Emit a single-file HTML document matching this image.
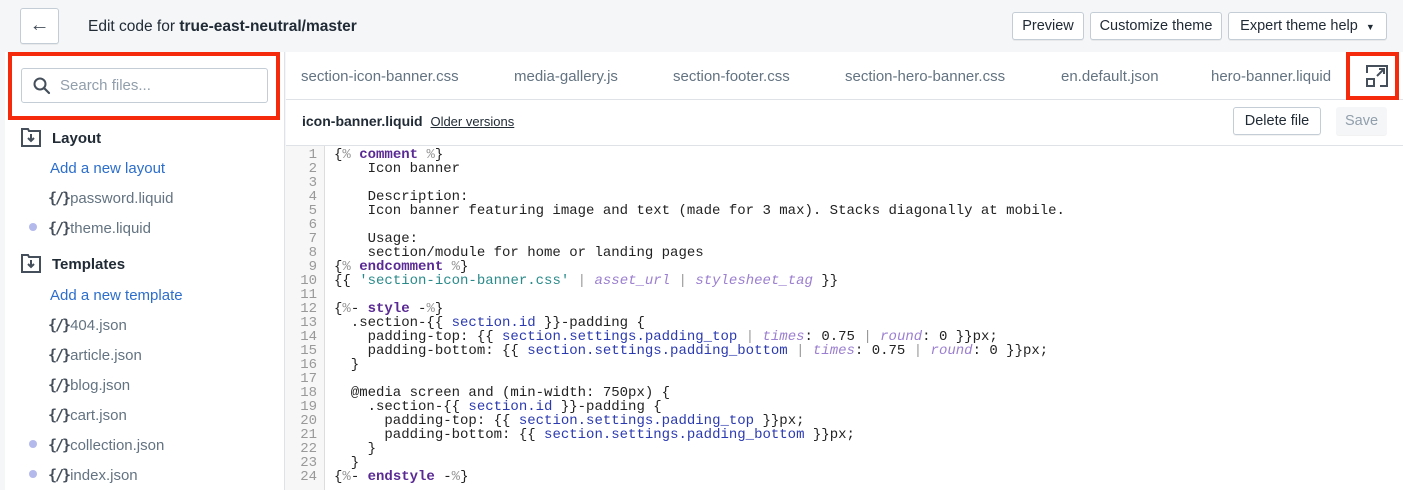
<!DOCTYPE html>
<html><head><style>
*{box-sizing:border-box;margin:0;padding:0}
body{width:1403px;height:490px;overflow:hidden;background:#f4f6f8;font-family:"Liberation Sans",sans-serif;position:relative;color:#212b36}
.abs{position:absolute}
.btn{position:absolute;top:12px;height:28px;border:1px solid #c4cdd5;border-radius:3px;background:#fff;font-size:14.5px;line-height:26px;text-align:center;color:#212b36;box-shadow:0 1px 0 rgba(0,0,0,.05)}
#side{position:absolute;left:5px;top:52px;width:280px;height:438px;background:#fff;border-right:1px solid #dfe3e8}
.tab{position:absolute;top:68px;font-size:15px;color:#637381}
.fi{position:absolute;left:48px;font-size:15px;color:#637381;white-space:nowrap}
.fi b{font-weight:bold;color:#454f5b;font-family:"DejaVu Sans Mono",monospace;font-size:15px;margin-right:1px;letter-spacing:-2px}
.dot{position:absolute;left:29px;width:8px;height:8px;border-radius:50%;background:#b4b9ec}
.link{position:absolute;left:50px;font-size:15px;color:#2c6ecb}
.hd{position:absolute;left:52px;font-size:15px;font-weight:bold;color:#212b36}
#code{position:absolute;left:285px;top:146px;width:1118px;height:344px;background:#fff}
#gut{position:absolute;left:0;top:0;width:40px;height:344px;background:#f7f7f7;border-right:1px solid #ddd}
pre{font-family:"Liberation Mono",monospace;font-size:14px;line-height:14px}
#nums{position:absolute;left:0;top:2px;width:32px;text-align:right;color:#999}
#src{position:absolute;left:49px;top:2px;color:#222}
.k{color:#5a2a94;font-weight:bold}.s{color:#2a8a8a}.f{color:#9b7fd0;font-style:italic}.p{color:#999}.v{color:#2b3ab0}
</style></head><body>
<div class="btn" style="left:20px;top:8px;width:39px;height:36px;font-size:20px;line-height:32px;color:#454f5b">&#8592;</div>
<div class="abs" style="left:88px;top:18px;font-size:15.5px;color:#212b36">Edit code for <b>true-east-neutral/master</b></div>
<div class="btn" style="left:1012px;width:72px">Preview</div>
<div class="btn" style="left:1090px;width:132px">Customize theme</div>
<div class="btn" style="left:1228px;width:159px">Expert theme help &nbsp;<span style="font-size:9px">&#9660;</span></div>

<div id="side"></div>
<div class="abs" style="left:8px;top:52px;width:272px;height:68px;border:4px solid #f5290c"></div>
<div class="abs" style="left:21px;top:68px;width:247px;height:35px;border:1px solid #c4cdd5;border-radius:3px;background:#fff"></div>
<svg class="abs" style="left:32px;top:76px" width="20" height="20" viewBox="0 0 20 20"><circle cx="8" cy="8" r="5.5" fill="none" stroke="#454f5b" stroke-width="2"/><path d="M12 12l5 5" stroke="#454f5b" stroke-width="2.2" stroke-linecap="round"/></svg>
<div class="abs" style="left:60px;top:77px;font-size:15px;color:#919eab">Search files...</div>

<svg class="abs" style="left:21px;top:128px" width="20" height="19" viewBox="0 0 20 19" fill="none" stroke="#454f5b" stroke-width="2"><path d="M1 1h6l1 2h11v15H1z"/><path d="M10 6v7M7 10l3 3 3-3"/></svg>
<div class="hd" style="top:130px">Layout</div>
<div class="link" style="top:160px">Add a new layout</div>
<div class="fi" style="top:189px"><b>{/}</b>password.liquid</div>
<div class="dot" style="top:223px"></div>
<div class="fi" style="top:219px"><b>{/}</b>theme.liquid</div>
<svg class="abs" style="left:21px;top:254px" width="20" height="19" viewBox="0 0 20 19" fill="none" stroke="#454f5b" stroke-width="2"><path d="M1 1h6l1 2h11v15H1z"/><path d="M10 6v7M7 10l3 3 3-3"/></svg>
<div class="hd" style="top:256px">Templates</div>
<div class="link" style="top:287px">Add a new template</div>
<div class="fi" style="top:316px"><b>{/}</b>404.json</div>
<div class="fi" style="top:346px"><b>{/}</b>article.json</div>
<div class="fi" style="top:376px"><b>{/}</b>blog.json</div>
<div class="fi" style="top:406px"><b>{/}</b>cart.json</div>
<div class="dot" style="top:440px"></div>
<div class="fi" style="top:436px"><b>{/}</b>collection.json</div>
<div class="dot" style="top:470px"></div>
<div class="fi" style="top:466px"><b>{/}</b>index.json</div>

<div class="abs" style="left:286px;top:52px;width:1117px;height:48px;background:#fff;border-bottom:1px solid #dfe3e8"></div>
<div class="tab" style="left:301px">section-icon-banner.css</div>
<div class="tab" style="left:514px">media-gallery.js</div>
<div class="tab" style="left:673px">section-footer.css</div>
<div class="tab" style="left:845px">section-hero-banner.css</div>
<div class="tab" style="left:1061px">en.default.json</div>
<div class="tab" style="left:1211px">hero-banner.liquid</div>
<div class="abs" style="left:1346px;top:52px;width:53px;height:48px;border:4px solid #f5290c"></div>
<svg class="abs" style="left:1366px;top:65px" width="22" height="22" viewBox="0 0 22 22" fill="none" stroke="#454f5b" stroke-width="2"><path d="M1 8V1h20v20h-7"/><rect x="1" y="14" width="7" height="7"/><path d="M11 11l7-7M13 4h5v5"/></svg>

<div class="abs" style="left:286px;top:100px;width:1117px;height:46px;background:#fff;border-bottom:1px solid #dfe3e8"></div>
<div class="abs" style="left:302px;top:113px;font-size:14px;font-weight:bold;color:#212b36">icon-banner.liquid <span style="font-weight:normal;font-size:13px;text-decoration:underline;margin-left:4px">Older versions</span></div>
<div class="btn" style="left:1233px;top:107px;width:88px">Delete file</div>
<div class="btn" style="left:1336px;top:107px;width:51px;background:#f4f6f8;border-color:#f4f6f8;color:#919eab">Save</div>

<div id="code"><div id="gut"></div>
<pre id="nums">1
2
3
4
5
6
7
8
9
10
11
12
13
14
15
16
17
18
19
20
21
22
23
24</pre>
<pre id="src">{<span class="p">%</span> <span class="k">comment</span> <span class="p">%</span>}
    Icon banner

    Description:
    Icon banner featuring image and text (made for 3 max). Stacks diagonally at mobile.

    Usage:
    section/module for home or landing pages
{<span class="p">%</span> <span class="k">endcomment</span> <span class="p">%</span>}
{{ <span class="s">'section-icon-banner.css'</span> <span class="p">|</span> <span class="f">asset_url</span> <span class="p">|</span> <span class="f">stylesheet_tag</span> }}

{<span class="p">%</span>- <span class="k">style</span> -<span class="p">%</span>}
  .section-{{ <span class="v">section.id</span> }}-padding {
    padding-top: {{ <span class="v">section.settings.padding_top</span> <span class="p">|</span> <span class="f">times</span>: 0.75 <span class="p">|</span> <span class="f">round</span>: 0 }}px;
    padding-bottom: {{ <span class="v">section.settings.padding_bottom</span> <span class="p">|</span> <span class="f">times</span>: 0.75 <span class="p">|</span> <span class="f">round</span>: 0 }}px;
  }

  @media screen and (min-width: 750px) {
    .section-{{ <span class="v">section.id</span> }}-padding {
      padding-top: {{ <span class="v">section.settings.padding_top</span> }}px;
      padding-bottom: {{ <span class="v">section.settings.padding_bottom</span> }}px;
    }
  }
{<span class="p">%</span>- <span class="k">endstyle</span> -<span class="p">%</span>}</pre>
</div>
</body></html>
